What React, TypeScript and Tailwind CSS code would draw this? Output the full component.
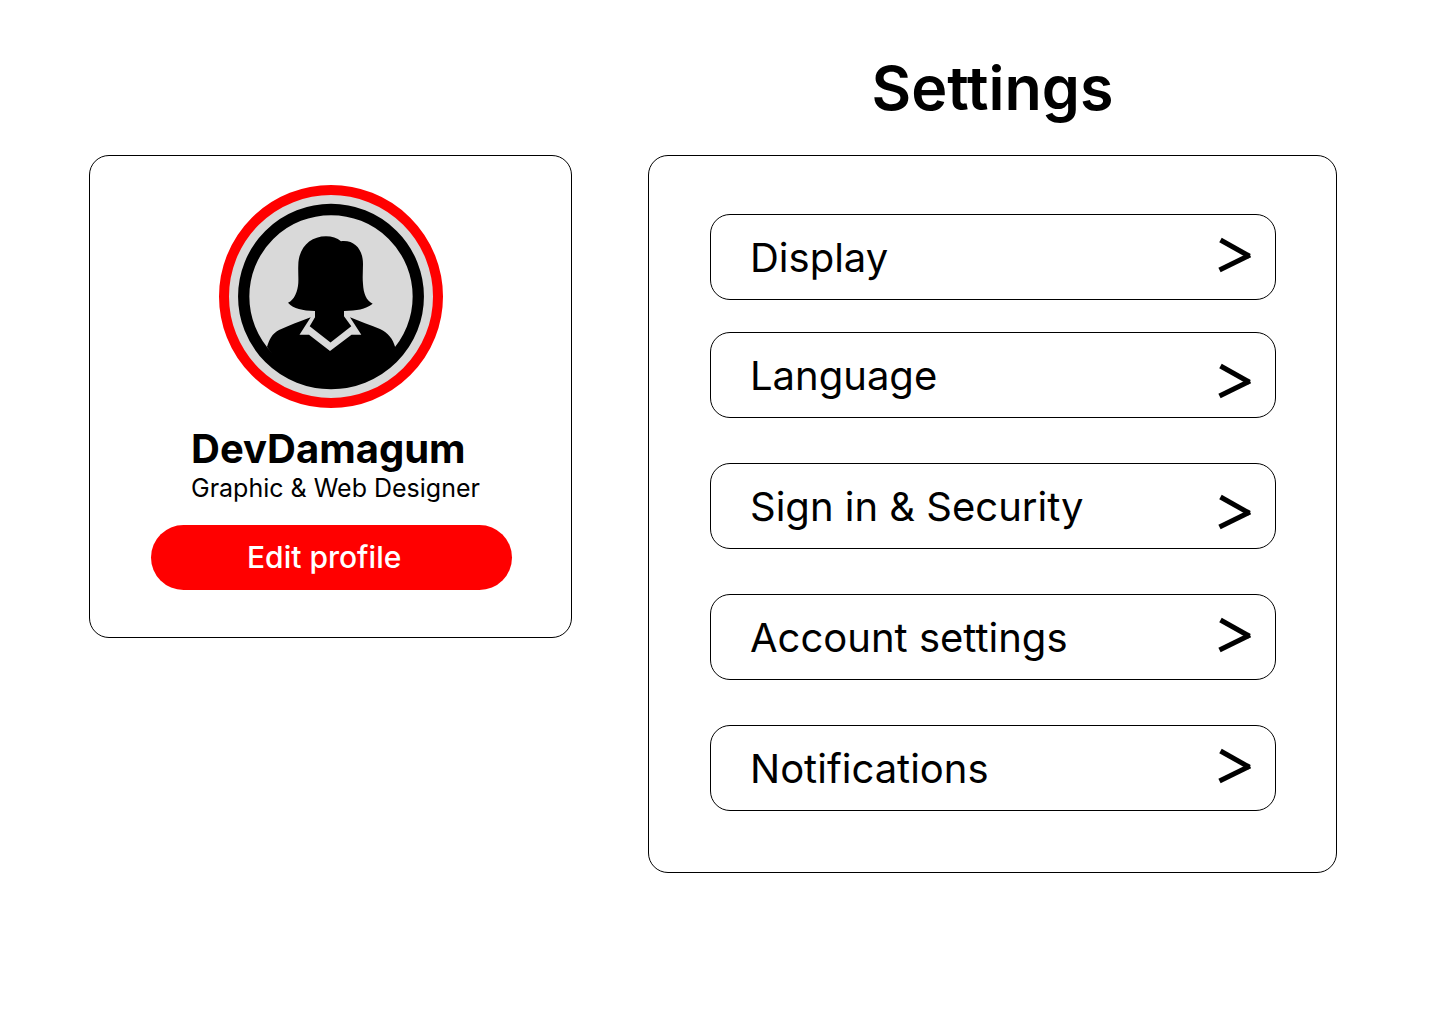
type ChevronPlacement = "middle" | "low";

const menu: { label: string; gap: string; chevron: ChevronPlacement }[] = [
  { label: "Display", gap: "", chevron: "middle" },
  { label: "Language", gap: "mt-8", chevron: "low" },
  { label: "Sign in & Security", gap: "mt-[45px]", chevron: "low" },
  { label: "Account settings", gap: "mt-[45px]", chevron: "middle" },
  { label: "Notifications", gap: "mt-[45px]", chevron: "middle" },
];

const chevronPadding: Record<ChevronPlacement, string> = {
  middle: "pb-1.5",
  low: "pt-2.5",
};

function Chevron() {
  return (
    <svg width="34" height="36" viewBox="0 0 34 36" fill="none" stroke="#000" strokeWidth="5" aria-hidden="true">
      <path d="M2.500 3 L31.500 19.300" />
      <path d="M1.500 33 L32 18" />
    </svg>
  );
}

function Avatar() {
  return (
    <svg width="225" height="224" viewBox="0 0 225 224" role="img" aria-label="Profile picture" className="mx-auto block">
      <ellipse cx="112" cy="111.5" rx="107" ry="106.5" fill="#d9d9d9" stroke="#ff0000" strokeWidth="10" />
      <ellipse cx="112" cy="111.5" rx="87.3" ry="87" fill="none" stroke="#000" strokeWidth="11.3" />
      <path
        d="M107 51.3 C113 51.3 118 53 122 56.2 C136 54.5 144 65 144 79 C144 86 143.3 92 144 99 C144.5 108 147 115.500 153.700 118.700 C146 124.500 138 125.500 125 126 L125 131.300 L132.300 141.300 L111.500 157.500 L90.700 141.300 L96 132.300 L96 126 C83 125.500 75 124 69 117.700 C75.500 115 78.800 106 79.300 98 C79.600 92 79 87 79.300 80 C79.500 63 91 51.300 107 51.300 Z"
        fill="#000"
      />
      <path
        d="M48 162 C50 155 53 148.500 60 145 C70 140.500 80 136.500 91.700 132.300 L80.500 149.700 L90 149.700 L111 166 L132.500 149.700 L142.300 149.700 L131 132.300 C141 136.500 151 140 161 144 C169 147.500 174 154 176.300 162.500 C160 187 138 198 112 198 C86 198 64 186 48 162 Z"
        fill="#000"
      />
    </svg>
  );
}

export default function App() {
  return (
    <main className="grid min-h-screen grid-cols-[483fr_689fr] grid-rows-[auto_auto] content-start items-start gap-x-[76px] bg-white pt-[52px] pr-[103px] pb-16 pl-[89px] font-['Inter',sans-serif] text-black">
      <h1 className="col-start-2 text-center text-[61px] leading-[73px] font-semibold">Settings</h1>

      <section aria-label="Profile" className="col-start-1 row-start-2 mt-[30px] rounded-[20px] border border-black pt-[29px] pr-[59px] pb-[47px] pl-[61px]">
        <Avatar />
        <div className="mt-4 pl-10 whitespace-nowrap">
          <h2 className="text-[40px] leading-12 font-bold">DevDamagum</h2>
          <p className="text-[25px] leading-[30px]">Graphic &amp; Web Designer</p>
        </div>
        <button type="button" className="mt-[22px] flex h-[65px] w-full items-center rounded-full bg-[#ff0000] pb-0.5 pl-24 text-[30px] leading-9 font-medium text-white">
          Edit profile
        </button>
      </section>

      <nav aria-label="Settings" className="col-start-2 row-start-2 mt-[30px] rounded-[20px] border border-black pt-[58px] pr-[60px] pb-[61px] pl-[61px]">
        <ul>
          {menu.map((item) => (
            <li key={item.label} className={item.gap}>
              <button type="button" className="flex h-[86px] w-full items-center justify-between rounded-[20px] border border-black pt-0.5 pr-[23px] pl-[39px] text-left text-[40px] leading-12">
                {item.label}
                <span className={chevronPadding[item.chevron]}>
                  <Chevron />
                </span>
              </button>
            </li>
          ))}
        </ul>
      </nav>
    </main>
  );
}
